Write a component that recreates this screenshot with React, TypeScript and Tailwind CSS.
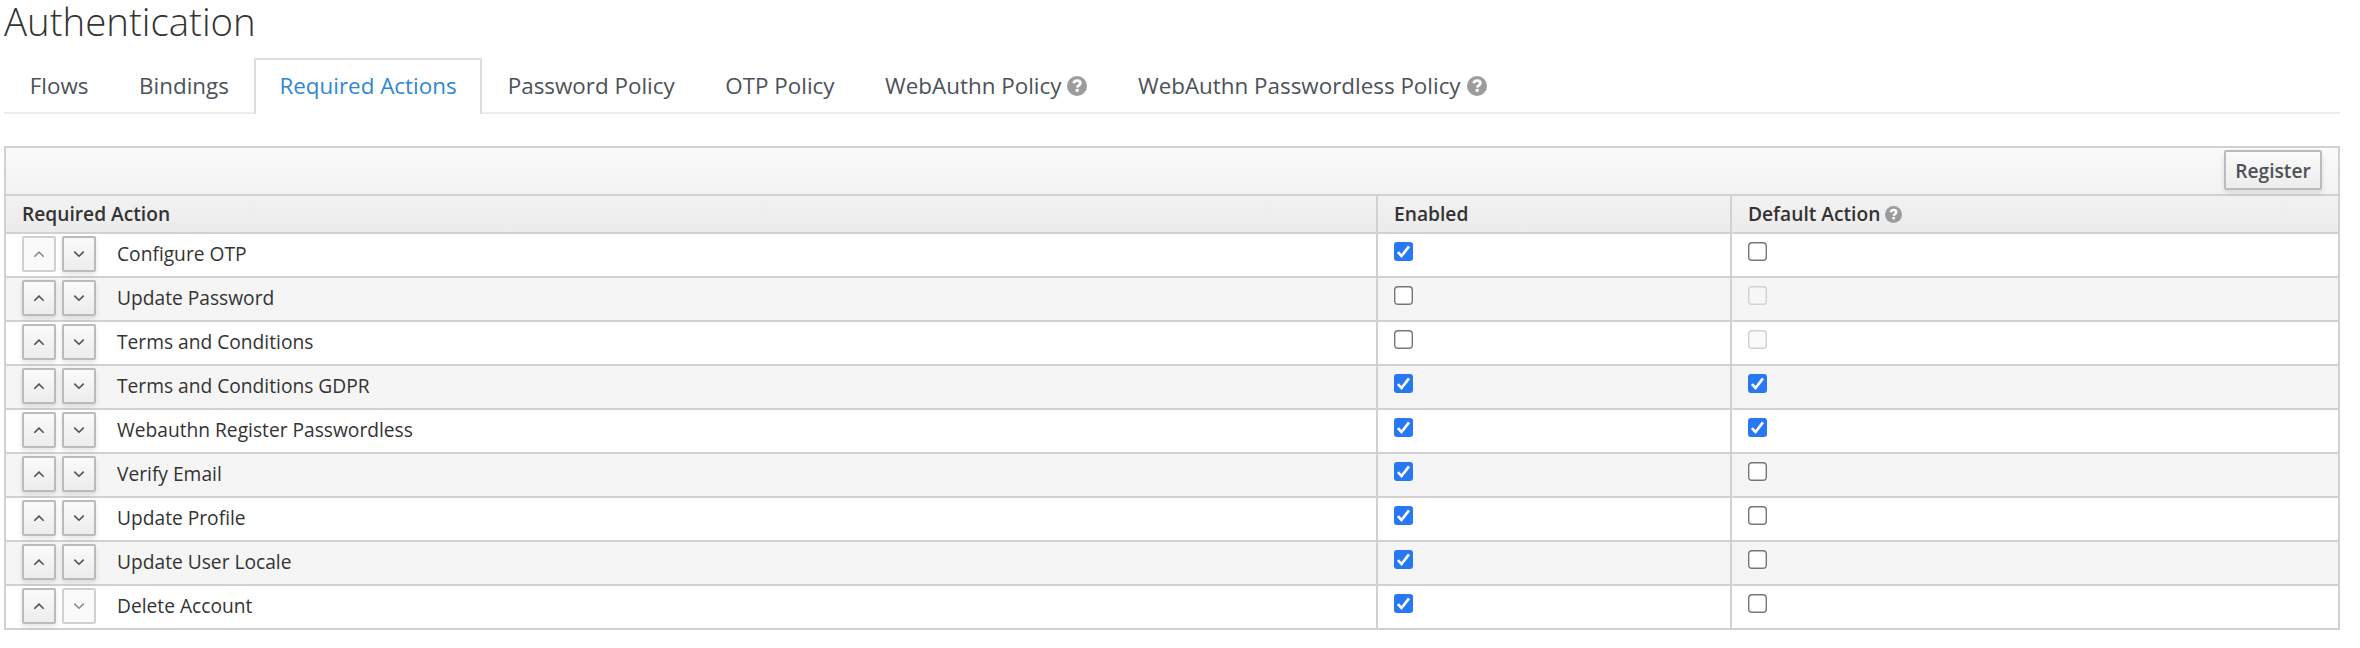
import React from "react";

type Check = "on" | "off" | "disabled";
const rows: [string, Check, Check][] = [
  ["Configure OTP", "on", "off"],
  ["Update Password", "off", "disabled"],
  ["Terms and Conditions", "off", "disabled"],
  ["Terms and Conditions GDPR", "on", "on"],
  ["Webauthn Register Passwordless", "on", "on"],
  ["Verify Email", "on", "off"],
  ["Update Profile", "on", "off"],
  ["Update User Locale", "on", "off"],
  ["Delete Account", "on", "off"],
];

function Help({ className }: { className: string }) {
  return (
    <svg viewBox="0 0 20 20" className={className} aria-hidden="true">
      <circle cx="10" cy="10" r="10" fill="#9c9c9c" />
      <path
        d="M6.7 7.3C7.1 5.4 8.3 4.7 10.1 4.7c1.9 0 3.2 1 3.2 2.6 0 2.2-2.9 2-2.9 4.1"
        fill="none"
        stroke="#fff"
        strokeWidth="2.8"
      />
      <rect x="8.7" y="12.9" width="3" height="2.9" fill="#fff" />
    </svg>
  );
}

function CheckBox({ state }: { state: Check }) {
  if (state === "on")
    return (
      <span role="checkbox" aria-checked="true" className="block size-[19px] rounded-[3px] bg-[#2878f6]">
        <svg viewBox="0 0 19 19" className="block size-[19px]" aria-hidden="true">
          <path d="M3.9 10.1 7.5 14 15 4.4" fill="none" stroke="#fff" strokeWidth="2.6" />
        </svg>
      </span>
    );
  return (
    <span
      role="checkbox"
      aria-checked="false"
      className={
        state === "off"
          ? "block size-[19px] rounded-[4px] bg-white inset-ring-[1.4px] inset-ring-[#767676]"
          : "block size-[19px] rounded-[4px] bg-[#f8f8f8]/70 inset-ring-[1.4px] inset-ring-[#d1d1d1]"
      }
    />
  );
}

function Arrow({ up, disabled }: { up?: boolean; disabled?: boolean }) {
  return (
    <button
      disabled={disabled}
      className={
        disabled
          ? "flex h-9 w-[34px] items-center justify-center rounded-[2px] border-2 border-[#d1d1d1] bg-[#fafafa] text-[#8b8d8f]"
          : "flex h-9 w-[34px] items-center justify-center rounded-[2px] border-2 border-[#bbbbbb] bg-linear-to-b from-[#fafafa] to-[#ededed] text-[#4d5258] shadow-[0_3px_5px_rgba(3,3,3,0.1)]"
      }
    >
      <svg viewBox="0 0 12 8" className="h-2 w-3" aria-hidden="true">
        <path d={up ? "M1.3 6.7 6 2.1 10.7 6.7" : "M1.3 1.6 6 6.2 10.7 1.6"} fill="none" stroke="currentColor" strokeWidth="1.6" />
      </svg>
    </button>
  );
}

function Tab({ label, help, active }: { label: string; help?: boolean; active?: boolean }) {
  return (
    <div
      className={
        active
          ? "flex h-14 items-start border-2 border-b-0 border-[#dddddd] bg-white pl-[23.8px] pr-[23.4px] pt-[10px] text-[#2f88cf]"
          : "flex h-14 items-start pl-[25.8px] pr-[24.8px] pt-3 text-[#4d5258]"
      }
    >
      <span className="leading-[32px]">{label}</span>
      {help && <Help className="ml-[6px] mt-[6px] h-5 w-5" />}
    </div>
  );
}

export default function App() {
  return (
    <div className="h-[648px] w-[2360px] bg-white pl-1 pr-5 font-['Open_Sans',sans-serif] text-[19.2px] text-[#333333]">
      <h1 className="h-[58px] text-[38.4px] font-light leading-[43px]">Authentication</h1>
      <nav className="flex h-14 border-b-2 border-[#ededed] text-[22.4px]">
        <Tab label="Flows" />
        <Tab label="Bindings" />
        <Tab label="Required Actions" active />
        <Tab label="Password Policy" />
        <Tab label="OTP Policy" />
        <Tab label="WebAuthn Policy" help />
        <Tab label="WebAuthn Passwordless Policy" help />
      </nav>
      <div className="mt-8 border-2 border-[#d1d1d1]">
        <div className="h-[86px] bg-linear-to-b from-[#fafafa] to-[#ebebeb]">
          <div className="flex h-[46px] justify-end pr-4 pt-[2px]">
            <button className="h-10 w-[98px] rounded-[2px] border-2 border-[#bbbbbb] bg-linear-to-b from-[#fafafa] to-[#ededed] font-semibold leading-[34px] pt-[2px] text-[#4d5258] shadow-[0_3px_5px_rgba(3,3,3,0.1)]">
              Register
            </button>
          </div>
          <div className="grid h-10 grid-cols-[1370px_354px_1fr] border-y-2 border-[#d1d1d1] font-semibold leading-[36px]">
            <div className="pl-4">Required Action</div>
            <div className="border-l-2 border-[#d1d1d1] pl-4">Enabled</div>
            <div className="flex border-l-2 border-[#d1d1d1] pl-4">
              Default Action
              <Help className="ml-[5px] mt-[10px] size-[17px]" />
            </div>
          </div>
        </div>
        {rows.map(([name, enabled, def], i) => (
          <div
            key={name}
            className="grid h-11 grid-cols-[1370px_354px_1fr] border-b-2 border-[#d1d1d1] odd:bg-[#f5f5f5] even:bg-white last:h-[42px] last:border-b-0"
          >
            <div className="flex pl-4 pt-[2px]">
              <Arrow up disabled={i === 0} />
              <span className="w-[6px]" />
              <Arrow disabled={i === rows.length - 1} />
              <span className="pl-[21px] leading-[35px]">{name}</span>
            </div>
            <div className="border-l-2 border-[#d1d1d1] pl-4 pt-2">
              <CheckBox state={enabled} />
            </div>
            <div className="border-l-2 border-[#d1d1d1] pl-4 pt-2">
              <CheckBox state={def} />
            </div>
          </div>
        ))}
      </div>
    </div>
  );
}
